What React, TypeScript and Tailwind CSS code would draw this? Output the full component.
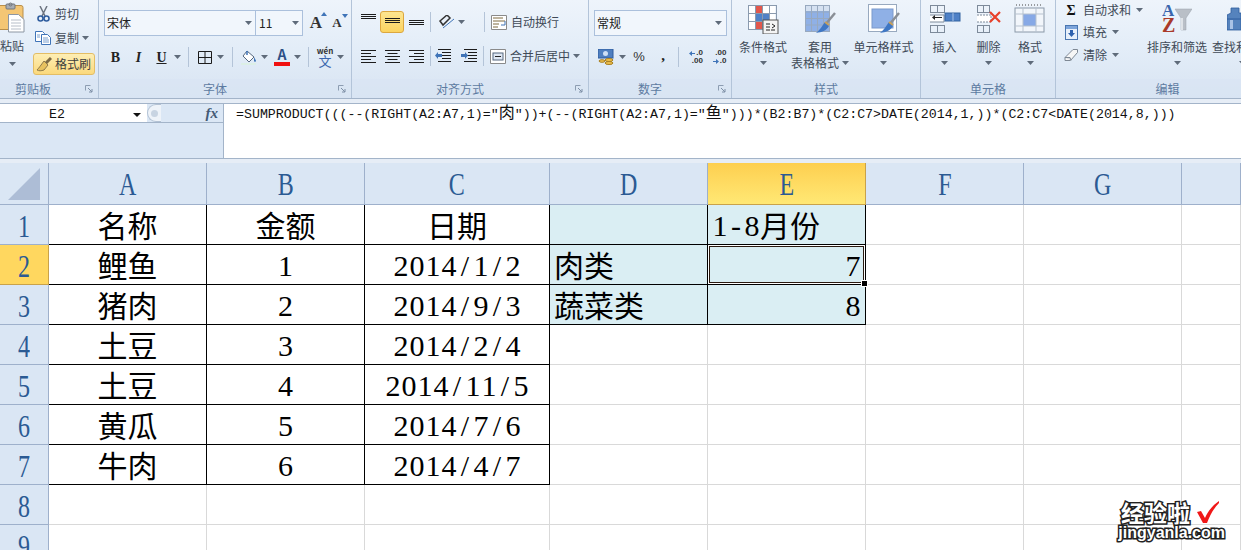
import React from 'react';

const ui = { fontFamily: '"Noto Sans CJK SC", "Liberation Sans", sans-serif' };
const mono = { fontFamily: '"Liberation Mono", "Noto Sans CJK SC", monospace' };
const serif = { fontFamily: '"Liberation Serif", "Noto Sans CJK SC", serif' };

const formula =
  '=SUMPRODUCT(((--(RIGHT(A2:A7,1)="肉"))+(--(RIGHT(A2:A7,1)="鱼")))*(B2:B7)*(C2:C7>DATE(2014,1,))*(C2:C7<DATE(2014,8,)))';

function Caret({ color = '#5f6b7a' }: { color?: string }) {
  return (
    <svg width="7" height="4" viewBox="0 0 7 4">
      <path d="M0 0h7L3.500 4z" fill={color} />
    </svg>
  );
}

function Slot({ w, children, className = '' }: { w: string; children?: React.ReactNode; className?: string }) {
  return <div className={`flex items-center justify-center shrink-0 h-full ${w} ${className}`}>{children}</div>;
}

function Sep() {
  return <div className="w-px h-[20px] shrink-0 bg-[#b4c4d8] self-center" />;
}

function Launcher() {
  return (
    <svg width="8" height="8" viewBox="0 0 8 8">
      <path d="M0.500 0.500h5M0.500 0.500v5" stroke="#8d9db2" fill="none" />
      <path d="M3 3l4 4M7 4v3H4" stroke="#7d8ea5" fill="none" />
    </svg>
  );
}

function Group({ label, w, launcher, labelClass = '', children }: { label: string; w: string; launcher?: boolean; labelClass?: string; children: React.ReactNode }) {
  return (
    <div className={`flex flex-col shrink-0 h-full border-r border-[#b3c4d9] ${w}`}>
      <div className="h-[79px] shrink-0">{children}</div>
      <div className="h-[20px] flex items-center text-[12px] text-[#5d7ba1] bg-[#d9e5f3]/60">
        <div className={`flex-1 text-center whitespace-nowrap ${labelClass}`}>{label}</div>
        {launcher && <div className="w-[20px] flex items-center justify-center pl-[2px]"><Launcher /></div>}
      </div>
    </div>
  );
}

function BigButton({ w, icon, lines, inlineCaret }: { w: string; icon: React.ReactNode; lines: string[]; inlineCaret?: boolean }) {
  return (
    <div className={`flex flex-col items-center shrink-0 pt-[4px] ${w}`}>
      <div className="h-[30px] flex items-center justify-center">{icon}</div>
      <div className="mt-[5px] h-[16px] leading-[16px] text-[12px] text-[#404a57] whitespace-nowrap">{lines[0]}</div>
      {lines[1] ? (
        <div className="h-[16px] leading-[16px] text-[12px] text-[#404a57] whitespace-nowrap flex items-center gap-[3px]">
          {lines[1]}
          {inlineCaret && <Caret />}
        </div>
      ) : (
        <div className="h-[16px] flex items-center"><Caret /></div>
      )}
    </div>
  );
}

const hLines = (ys: number[]) => (
  <svg width="15" height="14" viewBox="0 0 15 14">
    {ys.map((y) => (
      <rect key={y} x="0" y={y} width="15" height="1" fill="#1c1c1c" />
    ))}
  </svg>
);

function HAlign({ kind }: { kind: 'l' | 'c' | 'r' }) {
  const widths = [15, 10, 15, 10, 15];
  return (
    <svg width="15" height="13" viewBox="0 0 15 13">
      {widths.map((w, i) => (
        <rect key={i} x={kind === 'l' ? 0 : kind === 'c' ? (15 - w) / 2 : 15 - w} y={i * 3} width={w} height="1" fill="#1c1c1c" />
      ))}
    </svg>
  );
}

function Indent({ right }: { right?: boolean }) {
  return (
    <svg width="16" height="14" viewBox="0 0 16 14">
      {[0, 3, 6, 9, 12].map((y, i) => (
        <rect key={y} x={i % 2 ? 7 : 3} y={y} width={i % 2 ? 9 : 13} height="1" fill="#1c1c1c" />
      ))}
      <path d={right ? 'M0 5h4V3l3 3.500-3 3.500V8H0z' : 'M7 5H3V3L0 6.500 3 10V8h4z'} fill="#3f74b8" />
    </svg>
  );
}

function GridIcon({ children, w = 32, h = 30 }: { children?: React.ReactNode; w?: number; h?: number }) {
  return (
    <svg width={w} height={h} viewBox={`0 0 ${w} ${h}`}>
      {children}
    </svg>
  );
}

const gridLines = (x: number, y: number, cols: number, rows: number, cw: number, ch: number, c = '#8a9aae') => {
  const out: React.ReactNode[] = [];
  for (let i = 0; i <= cols; i++) out.push(<rect key={`c${i}`} x={x + i * cw} y={y} width="1" height={rows * ch + 1} fill={c} />);
  for (let j = 0; j <= rows; j++) out.push(<rect key={`r${j}`} x={x} y={y + j * ch} width={cols * cw + 1} height="1" fill={c} />);
  return out;
};

function Brush() {
  return (
    <g>
      <path d="M31 9L21 21" stroke="#8a8f96" strokeWidth="2.500" />
      <path d="M21 18l4 4c-3 5-7 6-13 7 4-3 6-7 9-11z" fill="#3f77c4" />
      <path d="M21 18l4 3" stroke="#c9a15a" strokeWidth="2" />
    </g>
  );
}

function Ribbon() {
  return (
    <div className="flex h-[99px] w-full overflow-hidden border-b border-[#a3b4c9] bg-gradient-to-b from-[#eef4fb] via-[#e3edf8] to-[#d8e4f2]" style={ui}>
      {/* 剪贴板 */}
      <Group label="剪贴板" w="w-[99px]" launcher labelClass="pr-[12px]">
        <div className="flex h-full">
          <div className="w-[33px] shrink-0 flex flex-col">
            <div className="w-[24px] h-[35px] pt-[3px]">
              <svg width="26" height="30" viewBox="0 0 26 30" className="overflow-visible">
                <rect x="-6" y="2.500" width="29" height="24" rx="2" fill="#f4c674" stroke="#b98f4a" />
                <rect x="6" y="1" width="9" height="5" rx="1" fill="#a8adb4" stroke="#70767e" />
                <circle cx="10.500" cy="1.500" r="1.500" fill="none" stroke="#70767e" />
                <path d="M8.500 11.500h10l5.500 5v12.500H8.500z" fill="#fff" stroke="#8c96a3" />
                <path d="M11 17h10M11 20h10M11 23h10M11 26h10" stroke="#b7bec8" />
              </svg>
            </div>
            <div className="w-[24px] h-[18px] mt-[2px] leading-[18px] text-[12px] text-[#404a57] whitespace-nowrap">粘贴</div>
            <div className="w-[24px] h-[16px] mt-[1px] flex items-center justify-center"><Caret /></div>
          </div>
          <div className="flex flex-col pt-[3px] text-[12px] text-[#404a57]">
            <div className="flex items-center h-[22px]">
              <Slot w="w-[20px]">
                <svg width="13" height="16" viewBox="0 0 13 16">
                  <path d="M3 0l5 10M10 0L5 10" stroke="#6c7480" strokeWidth="1.500" />
                  <circle cx="3.500" cy="12.500" r="2.500" fill="none" stroke="#2f5d9e" strokeWidth="1.600" />
                  <circle cx="9.500" cy="12.500" r="2.500" fill="none" stroke="#2f5d9e" strokeWidth="1.600" />
                </svg>
              </Slot>
              <span className="ml-[2px]">剪切</span>
            </div>
            <div className="flex items-center h-[22px] mt-[2px]">
              <Slot w="w-[20px]">
                <svg width="16" height="14" viewBox="0 0 16 14">
                  <path d="M.500.500h7l2 2v8h-9z" fill="#fff" stroke="#3f74b8" />
                  <path d="M6.500 3.500h6l3 3v7h-9z" fill="#fff" stroke="#3f74b8" />
                  <path d="M8 7h5M8 9h6M8 11h6M2 4h3M2 6h3" stroke="#7aa0cf" />
                </svg>
              </Slot>
              <span className="ml-[2px]">复制</span>
              <span className="ml-[3px] flex"><Caret /></span>
            </div>
            <div className="flex items-center h-[22px] w-[62px] mt-[4px] rounded-[3px] border border-[#e3bd65] bg-gradient-to-b from-[#fdeeb4] to-[#fbd97c] box-border">
              <Slot w="w-[19px]">
                <svg width="16" height="16" viewBox="0 0 16 16">
                  <path d="M15 2L9 8" stroke="#7c6a45" strokeWidth="3" />
                  <path d="M8 5l4 4-4 5c-3 1-5 1-7 0 2-2 4-5 7-9z" fill="#e8c25f" stroke="#8f7a4a" />
                </svg>
              </Slot>
              <span className="ml-[2px] text-[#3d3d3d]">格式刷</span>
            </div>
          </div>
        </div>
      </Group>

      {/* 字体 */}
      <Group label="字体" w="w-[253px]" launcher>
        <div className="pl-[5px] pt-[10px]">
          <div className="flex items-center h-[26px]">
            <div className="flex w-[199px] h-full border border-[#abc0dc] bg-[#f1f6fc] text-[12px] text-[#222] box-border">
              <div className="w-[151px] flex items-center justify-between border-r border-[#abc0dc] pl-[2px] pr-[3px]">
                <span>宋体</span>
                <Caret />
              </div>
              <div className="flex-1 flex items-center justify-between pl-[3px] pr-[3px]">
                <span>11</span>
                <Caret />
              </div>
            </div>
            <Slot w="w-[20px]" className="ml-[3px]">
              <span className="relative text-[17px] font-bold text-[#333]" style={serif}>
                A
                <svg className="absolute top-[2px] -right-[5px]" width="6" height="4" viewBox="0 0 6 4"><path d="M3 0l3 4H0z" fill="#3f74b8" /></svg>
              </span>
            </Slot>
            <Slot w="w-[22px]">
              <span className="relative text-[13px] font-bold text-[#333]" style={serif}>
                A
                <svg className="absolute top-[1px] -right-[6px]" width="6" height="4" viewBox="0 0 6 4"><path d="M0 0h6L3 4z" fill="#3f74b8" /></svg>
              </span>
            </Slot>
          </div>
          <div className="flex items-center h-[22px] mt-[10px] text-[#222]" style={serif}>
            <Slot w="w-[23px]"><span className="text-[14px] font-bold">B</span></Slot>
            <Slot w="w-[23px]"><span className="text-[14px] font-bold italic">I</span></Slot>
            <Slot w="w-[23px]"><span className="text-[14px] font-bold underline">U</span></Slot>
            <Slot w="w-[9px]"><Caret /></Slot>
            <Slot w="w-[6px]" />
            <Sep />
            <Slot w="w-[5px]" />
            <Slot w="w-[22px]">
              <svg width="14" height="13" viewBox="0 0 14 13"><path d="M.500.500h13v12H.500zM7 .500v12M.500 6.500h13" fill="none" stroke="#1c1c1c" /></svg>
            </Slot>
            <Slot w="w-[9px]"><Caret /></Slot>
            <Slot w="w-[7px]" />
            <Sep />
            <Slot w="w-[5px]" />
            <Slot w="w-[22px]">
              <svg width="16" height="15" viewBox="0 0 16 15">
                <path d="M6 1l7 6-5 5-6-6z" fill="#fff" stroke="#55677e" />
                <path d="M6 1v4" stroke="#3f74b8" strokeWidth="1.500" />
                <path d="M13 7c1 2 2 3 2 4s-2 1-2 0 0-2 0-4z" fill="#3f74b8" />
                <rect x="0" y="13" width="15" height="2" fill="#dcefe6" />
              </svg>
            </Slot>
            <Slot w="w-[9px]"><Caret /></Slot>
            <Slot w="w-[2px]" />
            <Slot w="w-[22px]">
              <div className="flex flex-col items-center">
                <span className="text-[14px] leading-[13px] font-bold text-[#2d4f86]" style={ui}>A</span>
                <div className="w-[16px] h-[4px] mt-[1px] bg-[#f01010]" />
              </div>
            </Slot>
            <Slot w="w-[9px]"><Caret /></Slot>
            <Slot w="w-[6px]" />
            <Sep />
            <Slot w="w-[5px]" />
            <Slot w="w-[22px]">
              <div className="flex flex-col items-center" style={ui}>
                <span className="text-[8px] leading-[7px] font-bold text-[#333]">wén</span>
                <span className="text-[13px] leading-[13px] text-[#3a66ad]">文</span>
              </div>
            </Slot>
            <Slot w="w-[9px]"><Caret /></Slot>
          </div>
        </div>
      </Group>

      {/* 对齐方式 */}
      <Group label="对齐方式" w="w-[237px]" launcher>
        <div className="pl-[4px] pt-[11px]">
          <div className="flex items-center h-[22px]">
            <Slot w="w-[24px]"><div className="pb-[3px]">{hLines([0, 2, 4])}</div></Slot>
            <Slot w="w-[24px]" className="rounded-[3px] border border-[#dca73f] bg-gradient-to-b from-[#fde690] to-[#fbd35f]"><div className="pt-[6px]">{hLines([0, 2, 4])}</div></Slot>
            <Slot w="w-[24px]"><div className="pt-[9px]">{hLines([0, 2, 4])}</div></Slot>
            <Slot w="w-[2px]" />
            <Sep />
            <Slot w="w-[6px]" />
            <Slot w="w-[20px]">
              <svg width="16" height="14" viewBox="0 0 16 14">
                <path d="M1 6l7-6 3 3-7 7z" fill="none" stroke="#333" strokeWidth="1.500" />
                <path d="M4 13L15 4" stroke="#3f74b8" />
              </svg>
            </Slot>
            <Slot w="w-[9px]"><Caret /></Slot>
            <Slot w="w-[18px]" />
            <Sep />
            <Slot w="w-[5px]" />
            <Slot w="w-[18px]">
              <svg width="16" height="15" viewBox="0 0 16 15">
                <path d="M.500.500h15v14H.500z" fill="#fff" stroke="#8a8a8a" />
                <path d="M2 3h10M2 6h12M2 9h6M2 12h5" stroke="#7f6a3f" />
                <path d="M14 6v4h-4" fill="none" stroke="#3f74b8" />
              </svg>
            </Slot>
            <span className="ml-[3px] text-[12px] text-[#404a57] whitespace-nowrap">自动换行</span>
          </div>
          <div className="flex items-center h-[22px] mt-[12px]">
            <Slot w="w-[24px]"><HAlign kind="l" /></Slot>
            <Slot w="w-[24px]"><HAlign kind="c" /></Slot>
            <Slot w="w-[24px]"><HAlign kind="r" /></Slot>
            <Slot w="w-[2px]" />
            <Sep />
            <Slot w="w-[24px]"><Indent /></Slot>
            <Slot w="w-[28px]"><Indent right /></Slot>
            <Sep />
            <Slot w="w-[5px]" />
            <Slot w="w-[18px]">
              <svg width="16" height="15" viewBox="0 0 16 15">
                <path d="M.500.500h15v14H.500z" fill="#fff" stroke="#8a8a8a" />
                <rect x="3" y="4" width="10" height="7" fill="#dfe8f4" stroke="#55677e" />
                <path d="M5 7.500h6" stroke="#222" />
              </svg>
            </Slot>
            <span className="ml-[3px] text-[12px] text-[#404a57] whitespace-nowrap">合并后居中</span>
            <span className="ml-[3px] flex"><Caret /></span>
          </div>
        </div>
      </Group>

      {/* 数字 */}
      <Group label="数字" w="w-[143px]" launcher>
        <div className="pl-[5px] pt-[10px]">
          <div className="flex items-center justify-between w-[133px] h-[26px] border border-[#abc0dc] bg-[#f1f6fc] pl-[2px] pr-[4px] text-[12px] text-[#222] box-border">
            <span>常规</span>
            <Caret />
          </div>
          <div className="flex items-center h-[22px] mt-[10px]">
            <Slot w="w-[24px]">
              <svg width="16" height="16" viewBox="0 0 16 16">
                <rect x="0" y="0" width="15" height="9" fill="#4f7fc0" stroke="#2f5d9e" />
                <circle cx="7.500" cy="4.500" r="2.500" fill="#cfe0f5" />
                <ellipse cx="11" cy="11" rx="4" ry="1.500" fill="#eec04f" stroke="#a77f22" />
                <ellipse cx="11" cy="14" rx="4" ry="1.500" fill="#eec04f" stroke="#a77f22" />
                <ellipse cx="4" cy="12" rx="3" ry="1.300" fill="#eec04f" stroke="#a77f22" />
              </svg>
            </Slot>
            <Slot w="w-[9px]"><Caret /></Slot>
            <Slot w="w-[24px]"><span className="text-[13px] text-[#333]" style={{ fontFamily: '"Liberation Sans", sans-serif' }}>%</span></Slot>
            <Slot w="w-[24px]"><span className="text-[15px] leading-[15px] font-bold text-[#222] pb-[4px]" style={serif}>,</span></Slot>
            <Slot w="w-[3px]" />
            <Sep />
            <Slot w="w-[5px]" />
            <Slot w="w-[24px]">
              <div className="flex flex-col text-[8px] leading-[8px] font-bold text-[#333] items-end" style={{ fontFamily: '"Liberation Sans", sans-serif' }}>
                <span className="flex items-center gap-[1px]"><svg width="6" height="5" viewBox="0 0 6 5"><path d="M0 2.500L3 0v2h3v1H3v2z" fill="#3f74b8" /></svg>.0</span>
                <span>.00</span>
              </div>
            </Slot>
            <Slot w="w-[23px]">
              <div className="flex flex-col text-[8px] leading-[8px] font-bold text-[#333] items-end" style={{ fontFamily: '"Liberation Sans", sans-serif' }}>
                <span>.00</span>
                <span className="flex items-center gap-[1px]"><svg width="6" height="5" viewBox="0 0 6 5"><path d="M6 2.500L3 0v2H0v1h3v2z" fill="#3f74b8" /></svg>.0</span>
              </div>
            </Slot>
          </div>
        </div>
      </Group>

      {/* 样式 */}
      <Group label="样式" w="w-[189px]">
        <div className="flex">
          <BigButton
            w="w-[62px]"
            lines={['条件格式']}
            icon={
              <GridIcon>
                <rect x="1" y="1" width="27" height="24" fill="#fff" />
                <rect x="8" y="1" width="7" height="24" fill="#e2574c" />
                <rect x="8" y="9" width="15" height="8" fill="#4f81c7" />
                {gridLines(1, 1, 4, 3, 7, 8)}
                <rect x="16" y="16" width="15" height="14" fill="#f4f4f4" stroke="#555" />
                <path d="M19 20h4M19 23h4M19 26h4M25 20l3 2-3 2M28 26h-4" stroke="#222" fill="none" />
              </GridIcon>
            }
          />
          <BigButton
            w="w-[52px]"
            lines={['套用', '表格格式']}
            inlineCaret
            icon={
              <GridIcon>
                <rect x="1" y="7" width="25" height="20" fill="#8fb0e6" />
                <rect x="1" y="1" width="25" height="6" fill="#d5e1f1" />
                {gridLines(1, 1, 4, 4, 6, 6.500, '#98a9bf')}
                <Brush />
              </GridIcon>
            }
          />
          <BigButton
            w="w-[75px]"
            lines={['单元格样式']}
            icon={
              <GridIcon>
                <rect x="0.500" y="0.500" width="28" height="27" fill="#fff" stroke="#98a9bf" />
                <rect x="4" y="5" width="21" height="19" fill="#8fb0e6" stroke="#7b99cc" />
                <Brush />
              </GridIcon>
            }
          />
        </div>
      </Group>

      {/* 单元格 */}
      <Group label="单元格" w="w-[135px]">
        <div className="flex">
          <BigButton
            w="w-[47px]"
            lines={['插入']}
            icon={
              <GridIcon>
                {gridLines(1, 1, 2, 1, 7, 7, '#7d8a9a')}
                {gridLines(1, 21, 2, 1, 7, 7, '#7d8a9a')}
                <path d="M1 11h14v7H1" fill="#fff" stroke="#7d8a9a" />
                <rect x="16" y="9" width="15" height="8" fill="#4f81c7" stroke="#33639f" />
                <path d="M24 9v8" stroke="#a8c2e6" />
                <path d="M6 13h7v1H6v2l-3-2.500L6 11z" fill="#222" />
              </GridIcon>
            }
          />
          <BigButton
            w="w-[41px]"
            lines={['删除']}
            icon={
              <GridIcon w={26}>
                {gridLines(1, 1, 2, 1, 6, 7, '#7d8a9a')}
                {gridLines(1, 21, 2, 1, 6, 7, '#7d8a9a')}
                <path d="M1 11h14v7H1" fill="#fff" stroke="#7d8a9a" strokeDasharray="2 1" />
                <path d="M14 8l10 10M24 8L14 18" stroke="#e8402a" strokeWidth="2.200" />
              </GridIcon>
            }
          />
          <BigButton
            w="w-[42px]"
            lines={['格式']}
            icon={
              <GridIcon>
                <path d="M2 1h26" stroke="#444" strokeDasharray="1 2" />
                <rect x="1" y="4" width="29" height="24" fill="#f2f6fb" stroke="#8a98a8" />
                <rect x="9" y="10" width="13" height="12" fill="#87a9e6" />
                <path d="M9 4v24M22 4v24M1 10h29M1 22h29" stroke="#b7c2cf" />
              </GridIcon>
            }
          />
        </div>
      </Group>

      {/* 编辑 */}
      <Group label="编辑" w="w-[224px]">
        <div className="flex pl-[6px]">
          <div className="w-[84px] shrink-0 text-[12px] text-[#404a57]">
            <div className="flex items-center h-[20px]">
              <Slot w="w-[18px]"><span className="text-[14px] font-bold text-[#111]" style={serif}>Σ</span></Slot>
              <span className="ml-[3px]">自动求和</span>
              <span className="ml-[5px] flex"><Caret /></span>
            </div>
            <div className="flex items-center h-[20px] mt-[2px]">
              <Slot w="w-[18px]">
                <svg width="13" height="15" viewBox="0 0 13 15">
                  <rect x=".5" y=".5" width="12" height="14" fill="#e8f0fa" stroke="#4a76b0" />
                  <rect x="1" y="1" width="11" height="3" fill="#7da5db" />
                  <path d="M5 5h3v3h2l-3.500 4L3 8h2z" fill="#2f62ae" />
                </svg>
              </Slot>
              <span className="ml-[3px]">填充</span>
              <span className="ml-[5px] flex"><Caret /></span>
            </div>
            <div className="flex items-center h-[20px] mt-[3px]">
              <Slot w="w-[18px]">
                <svg width="14" height="12" viewBox="0 0 14 12">
                  <path d="M9 .500h4.500v3l-7 8H1v-3z" fill="#f6f6f6" stroke="#7e8894" />
                  <path d="M1 8.500h5l1 3" fill="#d7dbe0" stroke="#7e8894" />
                </svg>
              </Slot>
              <span className="ml-[3px]">清除</span>
              <span className="ml-[5px] flex"><Caret /></span>
            </div>
          </div>
          <BigButton
            w="w-[62px]"
            lines={['排序和筛选']}
            icon={
              <GridIcon w={30}>
                <path d="M13 5h17l-6 9v12h-5V14z" fill="#b9bfc7" stroke="#98a0aa" strokeWidth=".5" />
                <path d="M19 14h2v12h-2z" fill="#dfe3e8" />
                <text x="0" y="12" fontSize="17" fontWeight="700" fill="#3a66ad" style={serif}>A</text>
                <text x="0" y="28" fontSize="20" fontWeight="700" fill="#a93a2a" style={serif}>Z</text>
              </GridIcon>
            }
          />
          <BigButton
            w="w-[68px]"
            lines={['查找和选择']}
            icon={
              <GridIcon w={30}>
                <path d="M6 4h6v5h2v17H0V11l4-2V4z" fill="#5583bd" stroke="#2f5d9e" strokeWidth=".8" />
                <path d="M0 15h14" stroke="#2f5d9e" />
                <path d="M3 16h3v9H3z" fill="#a9c3e6" />
              </GridIcon>
            }
          />
        </div>
      </Group>
    </div>
  );
}

function FormulaBar() {
  return (
    <div className="flex h-[56px] border-y border-[#a3b4c9] bg-white">
      <div className="w-[224px] shrink-0 flex flex-col border-r border-[#a3b4c9] bg-[#dbe7f5]">
        <div className="h-[19px] flex border-b border-[#a3b4c9]">
          <div className="w-[147px] bg-white flex items-center pl-[49px] pt-[3px] text-[13.27px] text-[#111]" style={mono}>
            E2
            <svg className="ml-[68px]" width="8" height="4" viewBox="0 0 8 4"><path d="M0 0h8L4 4z" fill="#111" /></svg>
          </div>
          <div className="w-[14px] h-full rounded-l-full border border-r-0 border-[#b3c2d4] bg-[#eef3f9] flex items-center justify-center">
            <div className="w-[7px] h-[7px] rounded-full bg-[#c8d4e2]" />
          </div>
          <div className="flex-1 flex items-center justify-end pr-[5px] text-[15px] italic font-bold text-[#445a75]" style={serif}>fx</div>
        </div>
      </div>
      <div className="flex-1 pl-[12px] pt-[2px] h-[20px] leading-[16px] text-[13.27px] text-[#111] whitespace-pre" style={mono}>
        {formula.split(/([肉鱼])/).map((part, i) =>
          /[肉鱼]/.test(part) ? <span key={i} className="text-[16px]">{part}</span> : part
        )}
      </div>
    </div>
  );
}

const colHeaders = ['A', 'B', 'C', 'D', 'E', 'F', 'G', ''];
const colWidths = ['w-[158px]', 'w-[158px]', 'w-[185px]', 'w-[158px]', 'w-[158px]', 'w-[158px]', 'w-[158px]', 'w-[59px]'];

const tableData = [
  ['名称', '金额', '日期'],
  ['鲤鱼', '1', '2014/1/2'],
  ['猪肉', '2', '2014/9/3'],
  ['土豆', '3', '2014/2/4'],
  ['土豆', '4', '2014/11/5'],
  ['黄瓜', '5', '2014/7/6'],
  ['牛肉', '6', '2014/4/7'],
];

const sideData: Record<number, [string, string]> = {
  0: ['', '1-8月份'],
  1: ['肉类', '7'],
  2: ['蔬菜类', '8'],
};

// half-width chars sit on a 16px pitch, like the sheet's 宋体
function CellText({ text }: { text: string }) {
  return (
    <>
      {Array.from(text).map((ch, i) =>
        /[\x00-\x7f]/.test(ch) ? (
          <span key={i} className="inline-block w-[16px] text-center" style={serif}>{ch}</span>
        ) : (
          <span key={i} className="inline-block -translate-y-[2px]" style={ui}>{ch}</span>
        )
      )}
    </>
  );
}

function Cell({ w, text = '', black, blackRight, fill, align = 'center', children }: { w: string; text?: string; black?: boolean; blackRight?: boolean; fill?: boolean; align?: 'center' | 'left' | 'right'; children?: React.ReactNode }) {
  return (
    <div
      className={`relative shrink-0 h-full flex items-center whitespace-nowrap border-r border-b pt-[2px] text-[30px] leading-[34px] text-black ${w} ${black ? 'border-b-black' : 'border-b-[#d9d9d9]'} ${blackRight ? 'border-r-black' : 'border-r-[#d9d9d9]'} ${fill ? 'bg-[#daeef3]' : 'bg-white'} ${align === 'center' ? 'justify-center' : align === 'right' ? 'justify-end pr-[4px]' : 'justify-start pl-[4px]'}`}
    >
      <CellText text={text} />
      {children}
    </div>
  );
}

function Sheet() {
  const rows = [0, 1, 2, 3, 4, 5, 6, 7, 8];
  return (
    <div className="flex flex-col mt-[4px]">
      {/* column headers */}
      <div className="flex h-[42px]">
        <div className="w-[49px] shrink-0 border-r border-b border-[#9eb0cb] bg-[#dae6f4] flex items-center justify-center">
          <svg width="32" height="32" viewBox="0 0 32 32"><path d="M32 0v32H0z" fill="#adbdd6" /></svg>
        </div>
        {colHeaders.map((h, i) => (
          <div
            key={i}
            className={`shrink-0 flex items-center justify-center border-r border-b text-[32px] pt-[1px] text-[#2b5a93] ${colWidths[i]} ${h === 'E' ? 'border-[#c9a24a] bg-gradient-to-b from-[#fdcf4f] to-[#ffe874]' : 'border-[#9eb0cb] bg-[#dae6f4]'}`}
            style={serif}
          >
            <span className="inline-block scale-x-75">{h}</span>
          </div>
        ))}
      </div>
      {/* rows */}
      {rows.map((r) => {
        const t = tableData[r];
        const s = sideData[r];
        return (
          <div key={r} className="flex h-[40px]">
            <div
              className={`w-[49px] shrink-0 flex items-center justify-center border-r border-b pt-[2px] text-[32px] leading-[34px] text-[#2b5a93] ${r === 1 ? 'border-[#c9a24a] bg-[#ffd75f]' : 'border-[#9eb0cb] bg-[#dae6f4]'}`}
              style={serif}
            >
              <span className="inline-block scale-x-75">{r + 1}</span>
            </div>
            {colWidths.map((w, c) => {
              if (c < 3) {
                return <Cell key={c} w={w} text={t ? t[c] : ''} black={!!t} blackRight={!!t} />;
              }
              if (c === 3) {
                return <Cell key={c} w={w} text={s ? s[0] : ''} black={!!s} blackRight={!!s} fill={!!s} align="left" />;
              }
              if (c === 4) {
                return (
                  <Cell key={c} w={w} text={s ? s[1] : ''} black={!!s} blackRight={!!s} fill={!!s} align={r === 0 ? 'left' : 'right'}>
                    {r === 1 && (
                      <div className="absolute inset-0 z-10 border border-white shadow-[inset_0_0_0_1px_#2a1a10]">
                        <div className="absolute -right-[4px] -bottom-[4px] w-[5px] h-[5px] bg-black border border-white box-content" />
                      </div>
                    )}
                  </Cell>
                );
              }
              return <Cell key={c} w={w} />;
            })}
          </div>
        );
      })}
    </div>
  );
}

function Watermark() {
  const outline = '[-webkit-text-stroke:3px_#222] [paint-order:stroke_fill]';
  return (
    <div className="absolute right-[16px] bottom-[8px] flex flex-col items-end">
      <div className="flex items-center gap-[6px] mr-[5px]">
        <span className={`text-[23px] leading-[24px] font-bold text-white ${outline}`} style={ui}>经验啦</span>
        <svg width="24" height="24" viewBox="0 0 24 24">
          <path d="M1 12l4-1 4 7C12 11 17 5 23 1v2c-5 5-9 12-12 20H7z" fill="#f01818" />
        </svg>
      </div>
      <span className={`text-[16px] leading-[18px] font-bold text-white ${outline}`} style={{ fontFamily: '"Liberation Sans", sans-serif' }}>jingyanla.com</span>
    </div>
  );
}

export default function App() {
  return (
    <div className="relative w-[1241px] h-[550px] overflow-hidden bg-[#e6edf6]" style={ui}>
      <Ribbon />
      <div className="mt-[4px]">
        <FormulaBar />
      </div>
      <Sheet />
      <Watermark />
    </div>
  );
}
